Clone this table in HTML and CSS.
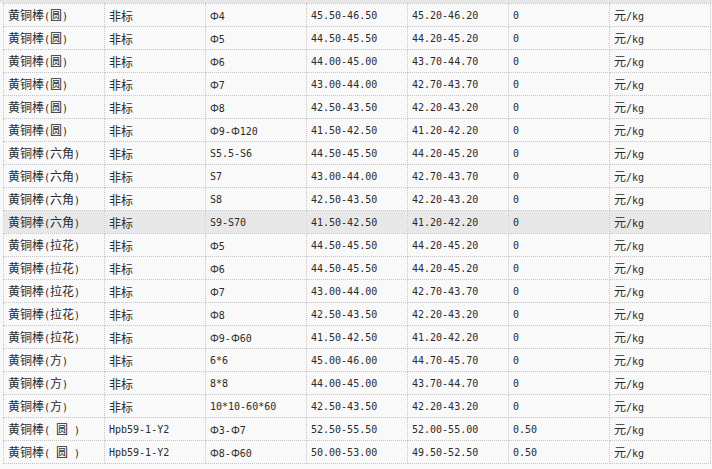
FILE: index.html
```html
<!DOCTYPE html>
<html lang="zh">
<head>
<meta charset="utf-8">
<link rel="stylesheet" href="styles.css">
</head>
<body>
<div class="strip"></div>
<table class="price">
<tbody>
<tr><td>黄铜棒<span class="m">(</span>圆<span class="m">)</span></td><td>非标</td><td class="m"><span class="phi">Φ</span>4</td><td class="m">45.50-46.50</td><td class="m">45.20-46.20</td><td class="m">0</td><td>元<span class="m">/kg</span></td></tr>
<tr><td>黄铜棒<span class="m">(</span>圆<span class="m">)</span></td><td>非标</td><td class="m"><span class="phi">Φ</span>5</td><td class="m">44.50-45.50</td><td class="m">44.20-45.20</td><td class="m">0</td><td>元<span class="m">/kg</span></td></tr>
<tr><td>黄铜棒<span class="m">(</span>圆<span class="m">)</span></td><td>非标</td><td class="m"><span class="phi">Φ</span>6</td><td class="m">44.00-45.00</td><td class="m">43.70-44.70</td><td class="m">0</td><td>元<span class="m">/kg</span></td></tr>
<tr><td>黄铜棒<span class="m">(</span>圆<span class="m">)</span></td><td>非标</td><td class="m"><span class="phi">Φ</span>7</td><td class="m">43.00-44.00</td><td class="m">42.70-43.70</td><td class="m">0</td><td>元<span class="m">/kg</span></td></tr>
<tr><td>黄铜棒<span class="m">(</span>圆<span class="m">)</span></td><td>非标</td><td class="m"><span class="phi">Φ</span>8</td><td class="m">42.50-43.50</td><td class="m">42.20-43.20</td><td class="m">0</td><td>元<span class="m">/kg</span></td></tr>
<tr><td>黄铜棒<span class="m">(</span>圆<span class="m">)</span></td><td>非标</td><td class="m"><span class="phi">Φ</span>9-<span class="phi">Φ</span>120</td><td class="m">41.50-42.50</td><td class="m">41.20-42.20</td><td class="m">0</td><td>元<span class="m">/kg</span></td></tr>
<tr><td>黄铜棒<span class="m">(</span>六角<span class="m">)</span></td><td>非标</td><td class="m">S5.5-S6</td><td class="m">44.50-45.50</td><td class="m">44.20-45.20</td><td class="m">0</td><td>元<span class="m">/kg</span></td></tr>
<tr><td>黄铜棒<span class="m">(</span>六角<span class="m">)</span></td><td>非标</td><td class="m">S7</td><td class="m">43.00-44.00</td><td class="m">42.70-43.70</td><td class="m">0</td><td>元<span class="m">/kg</span></td></tr>
<tr><td>黄铜棒<span class="m">(</span>六角<span class="m">)</span></td><td>非标</td><td class="m">S8</td><td class="m">42.50-43.50</td><td class="m">42.20-43.20</td><td class="m">0</td><td>元<span class="m">/kg</span></td></tr>
<tr class="hl"><td>黄铜棒<span class="m">(</span>六角<span class="m">)</span></td><td>非标</td><td class="m">S9-S70</td><td class="m">41.50-42.50</td><td class="m">41.20-42.20</td><td class="m">0</td><td>元<span class="m">/kg</span></td></tr>
<tr><td>黄铜棒<span class="m">(</span>拉花<span class="m">)</span></td><td>非标</td><td class="m"><span class="phi">Φ</span>5</td><td class="m">44.50-45.50</td><td class="m">44.20-45.20</td><td class="m">0</td><td>元<span class="m">/kg</span></td></tr>
<tr><td>黄铜棒<span class="m">(</span>拉花<span class="m">)</span></td><td>非标</td><td class="m"><span class="phi">Φ</span>6</td><td class="m">44.50-45.50</td><td class="m">44.20-45.20</td><td class="m">0</td><td>元<span class="m">/kg</span></td></tr>
<tr><td>黄铜棒<span class="m">(</span>拉花<span class="m">)</span></td><td>非标</td><td class="m"><span class="phi">Φ</span>7</td><td class="m">43.00-44.00</td><td class="m">42.70-43.70</td><td class="m">0</td><td>元<span class="m">/kg</span></td></tr>
<tr><td>黄铜棒<span class="m">(</span>拉花<span class="m">)</span></td><td>非标</td><td class="m"><span class="phi">Φ</span>8</td><td class="m">42.50-43.50</td><td class="m">42.20-43.20</td><td class="m">0</td><td>元<span class="m">/kg</span></td></tr>
<tr><td>黄铜棒<span class="m">(</span>拉花<span class="m">)</span></td><td>非标</td><td class="m"><span class="phi">Φ</span>9-<span class="phi">Φ</span>60</td><td class="m">41.50-42.50</td><td class="m">41.20-42.20</td><td class="m">0</td><td>元<span class="m">/kg</span></td></tr>
<tr><td>黄铜棒<span class="m">(</span>方<span class="m">)</span></td><td>非标</td><td class="m">6*6</td><td class="m">45.00-46.00</td><td class="m">44.70-45.70</td><td class="m">0</td><td>元<span class="m">/kg</span></td></tr>
<tr><td>黄铜棒<span class="m">(</span>方<span class="m">)</span></td><td>非标</td><td class="m">8*8</td><td class="m">44.00-45.00</td><td class="m">43.70-44.70</td><td class="m">0</td><td>元<span class="m">/kg</span></td></tr>
<tr><td>黄铜棒<span class="m">(</span>方<span class="m">)</span></td><td>非标</td><td class="m">10*10-60*60</td><td class="m">42.50-43.50</td><td class="m">42.20-43.20</td><td class="m">0</td><td>元<span class="m">/kg</span></td></tr>
<tr><td>黄铜棒<span class="m">( </span>圆<span class="m"> )</span></td><td class="m">Hpb59-1-Y2</td><td class="m"><span class="phi">Φ</span>3-<span class="phi">Φ</span>7</td><td class="m">52.50-55.50</td><td class="m">52.00-55.00</td><td class="m">0.50</td><td>元<span class="m">/kg</span></td></tr>
<tr><td>黄铜棒<span class="m">( </span>圆<span class="m"> )</span></td><td class="m">Hpb59-1-Y2</td><td class="m"><span class="phi">Φ</span>8-<span class="phi">Φ</span>60</td><td class="m">50.00-53.00</td><td class="m">49.50-52.50</td><td class="m">0.50</td><td>元<span class="m">/kg</span></td></tr>
</tbody>
</table>
</body>
</html>
```
FILE: styles.css
```css
html, body {
  margin: 0;
  padding: 0;
  background: #f9f9f9;
}
body {
  font-family: "Noto Sans CJK SC", sans-serif;
  font-size: 12px;
  color: #2b2b2b;
}
.strip {
  height: 3px;
  background: #e6e6e6;
}
.price {
  border-collapse: collapse;
  table-layout: fixed;
  width: 708px;
  margin-left: 3px;
}
.price td {
  width: 96px;
  height: 21px;
  padding: 1px 0 0 4px;
  border: 1px dotted #c4c4c4;
  vertical-align: middle;
  white-space: pre;
  line-height: 14px;
  overflow: hidden;
}
.price tr.hl td {
  background: #e8e8e8;
}
.m {
  font-family: "DejaVu Sans Mono", monospace;
  font-size: 10px;
}
.phi {
  font-family: "Noto Sans CJK SC", sans-serif;
  font-size: 11px;
}
```
